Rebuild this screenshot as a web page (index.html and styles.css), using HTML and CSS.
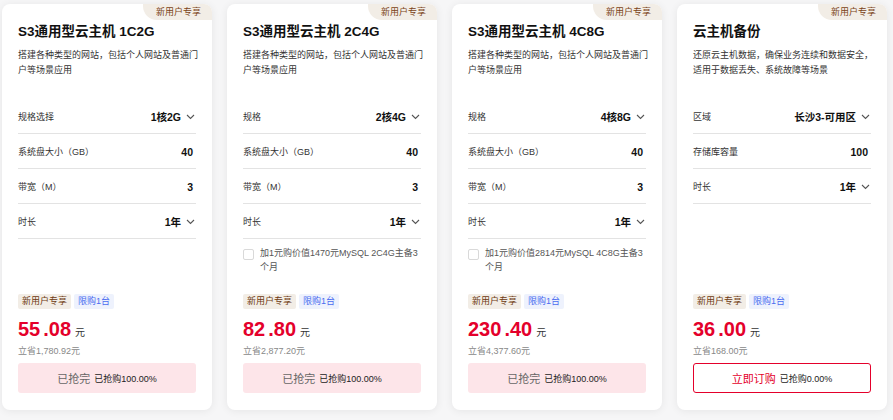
FILE: index.html
```html
<!DOCTYPE html>
<html lang="zh-CN">
<head>
<meta charset="utf-8">
<title>云主机</title>
<link rel="stylesheet" href="styles.css">
</head>
<body>
<div class="cards">

  <div class="card">
    <div class="badge">新用户专享</div>
    <h3 class="title">S3通用型云主机 1C2G</h3>
    <p class="desc">搭建各种类型的网站，包括个人网站及普通门<br>户等场景应用</p>
    <div class="row"><span class="label">规格选择</span><span class="value">1核2G<svg class="chev" viewBox="0 0 9 6"><path d="M1 1l3.5 3.5L8 1"/></svg></span></div>
    <div class="row"><span class="label">系统盘大小（GB）</span><span class="value plain">40</span></div>
    <div class="row"><span class="label">带宽（M）</span><span class="value plain">3</span></div>
    <div class="row"><span class="label">时长</span><span class="value">1年<svg class="chev" viewBox="0 0 9 6"><path d="M1 1l3.5 3.5L8 1"/></svg></span></div>
    <div class="bottom">
      <div class="tags"><span class="tag tag-new">新用户专享</span><span class="tag tag-limit">限购1台</span></div>
      <div class="price"><span class="num">55</span><span class="num dec">.08</span><span class="unit">元</span></div>
      <div class="save">立省1,780.92元</div>
      <div class="btn btn-done"><span class="btn-main">已抢完</span><span class="btn-sub">已抢购100.00%</span></div>
    </div>
  </div>

  <div class="card">
    <div class="badge">新用户专享</div>
    <h3 class="title">S3通用型云主机 2C4G</h3>
    <p class="desc">搭建各种类型的网站，包括个人网站及普通门<br>户等场景应用</p>
    <div class="row"><span class="label">规格</span><span class="value">2核4G<svg class="chev" viewBox="0 0 9 6"><path d="M1 1l3.5 3.5L8 1"/></svg></span></div>
    <div class="row"><span class="label">系统盘大小（GB）</span><span class="value plain">40</span></div>
    <div class="row"><span class="label">带宽（M）</span><span class="value plain">3</span></div>
    <div class="row"><span class="label">时长</span><span class="value">1年<svg class="chev" viewBox="0 0 9 6"><path d="M1 1l3.5 3.5L8 1"/></svg></span></div>
    <label class="option"><span class="box"></span><span class="opt-text">加1元购价值1470元MySQL 2C4G主备3个月</span></label>
    <div class="bottom">
      <div class="tags"><span class="tag tag-new">新用户专享</span><span class="tag tag-limit">限购1台</span></div>
      <div class="price"><span class="num">82</span><span class="num dec">.80</span><span class="unit">元</span></div>
      <div class="save">立省2,877.20元</div>
      <div class="btn btn-done"><span class="btn-main">已抢完</span><span class="btn-sub">已抢购100.00%</span></div>
    </div>
  </div>

  <div class="card">
    <div class="badge">新用户专享</div>
    <h3 class="title">S3通用型云主机 4C8G</h3>
    <p class="desc">搭建各种类型的网站，包括个人网站及普通门<br>户等场景应用</p>
    <div class="row"><span class="label">规格</span><span class="value">4核8G<svg class="chev" viewBox="0 0 9 6"><path d="M1 1l3.5 3.5L8 1"/></svg></span></div>
    <div class="row"><span class="label">系统盘大小（GB）</span><span class="value plain">40</span></div>
    <div class="row"><span class="label">带宽（M）</span><span class="value plain">3</span></div>
    <div class="row"><span class="label">时长</span><span class="value">1年<svg class="chev" viewBox="0 0 9 6"><path d="M1 1l3.5 3.5L8 1"/></svg></span></div>
    <label class="option"><span class="box"></span><span class="opt-text">加1元购价值2814元MySQL 4C8G主备3个月</span></label>
    <div class="bottom">
      <div class="tags"><span class="tag tag-new">新用户专享</span><span class="tag tag-limit">限购1台</span></div>
      <div class="price"><span class="num">230</span><span class="num dec">.40</span><span class="unit">元</span></div>
      <div class="save">立省4,377.60元</div>
      <div class="btn btn-done"><span class="btn-main">已抢完</span><span class="btn-sub">已抢购100.00%</span></div>
    </div>
  </div>

  <div class="card">
    <div class="badge">新用户专享</div>
    <h3 class="title">云主机备份</h3>
    <p class="desc">还原云主机数据，确保业务连续和数据安全，<br>适用于数据丢失、系统故障等场景</p>
    <div class="row"><span class="label">区域</span><span class="value">长沙3-可用区<svg class="chev" viewBox="0 0 9 6"><path d="M1 1l3.5 3.5L8 1"/></svg></span></div>
    <div class="row"><span class="label">存储库容量</span><span class="value plain">100</span></div>
    <div class="row"><span class="label">时长</span><span class="value">1年<svg class="chev" viewBox="0 0 9 6"><path d="M1 1l3.5 3.5L8 1"/></svg></span></div>
    <div class="bottom">
      <div class="tags"><span class="tag tag-new">新用户专享</span><span class="tag tag-limit">限购1台</span></div>
      <div class="price"><span class="num">36</span><span class="num dec">.00</span><span class="unit">元</span></div>
      <div class="save">立省168.00元</div>
      <div class="btn btn-buy"><span class="btn-main">立即订购</span><span class="btn-sub">已抢购0.00%</span></div>
    </div>
  </div>

</div>
</body>
</html>
```

FILE: styles.css
```css
* { box-sizing: border-box; }
html, body { margin: 0; padding: 0; }
body {
  background: #f6f6f7;
  font-family: "Liberation Sans", "Noto Sans CJK SC", sans-serif;
  color: #333;
  width: 893px;
  height: 420px;
  overflow: hidden;
}
.cards {
  display: flex;
  gap: 15px;
  padding: 4px 0 0 2px;
  height: 410px;
}
.card {
  position: relative;
  width: 210px;
  background: #fff;
  border-radius: 8px;
  box-shadow: 0 1px 8px rgba(0, 0, 0, 0.07);
  padding: 18px 16px 17px;
  display: flex;
  flex-direction: column;
}
.badge {
  position: absolute;
  top: 0;
  right: 0;
  height: 16px;
  line-height: 16px;
  padding: 0 11px 0 13px;
  font-size: 9px;
  color: #7a4316;
  background: #f2ede6;
  border-radius: 0 8px 0 14px;
}
.title {
  margin: 0;
  font-size: 13.5px;
  line-height: 20px;
  font-weight: bold;
  color: #111;
}
.desc {
  margin: 6px -6px 21px 0;
  font-size: 9px;
  line-height: 15px;
  color: #333;
  white-space: nowrap;
}
.row {
  display: flex;
  justify-content: space-between;
  align-items: center;
  padding: 10px 1px 8px 0;
  line-height: 16px;
  border-bottom: 1px solid #e3e3e3;
}
.label {
  font-size: 9px;
  color: #333;
}
.value {
  display: flex;
  align-items: center;
  font-size: 10.5px;
  font-weight: bold;
  color: #111;
}
.value.plain {
  padding-right: 2px;
}
.chev {
  width: 9px;
  height: 6px;
  margin-left: 5px;
  fill: none;
  stroke: #555;
  stroke-width: 1.1;
}
.option {
  display: flex;
  align-items: flex-start;
  margin-top: 7px;
  font-size: 9px;
  line-height: 14px;
  color: #555;
}
.box {
  flex: none;
  width: 11px;
  height: 11px;
  margin: 3px 6px 0 0;
  border: 1px solid #d9d9d9;
  border-radius: 2px;
  background: #fff;
}
.bottom {
  margin-top: auto;
}
.tags {
  display: flex;
  gap: 3px;
}
.tag {
  height: 15px;
  line-height: 15px;
  padding: 0 4px;
  font-size: 9px;
  border-radius: 2px;
}
.tag-new {
  background: #f2ede6;
  color: #6e3a10;
}
.tag-limit {
  background: #eef2fd;
  color: #4a6cf0;
}
.price {
  margin-top: 7px;
  height: 26px;
  line-height: 26px;
  color: #e4002b;
  white-space: nowrap;
}
.num {
  font-size: 20px;
  font-weight: bold;
}
.dec {
  margin-left: 3px;
}
.unit {
  margin-left: 4px;
  font-size: 10px;
  color: #333;
}
.save {
  margin-top: 2px;
  line-height: 14px;
  font-size: 9px;
  color: #888;
}
.btn {
  margin-top: 5px;
  height: 30px;
  border-radius: 3px;
  display: flex;
  justify-content: center;
  align-items: center;
  gap: 4px;
}
.btn-done {
  background: #fde5e9;
}
.btn-buy {
  border: 1px solid #e4002b;
  background: #fff;
}
.btn-main {
  font-size: 11px;
  color: #666;
}
.btn-buy .btn-main {
  color: #e4002b;
}
.btn-sub {
  font-size: 9px;
  color: #222;
}
```
